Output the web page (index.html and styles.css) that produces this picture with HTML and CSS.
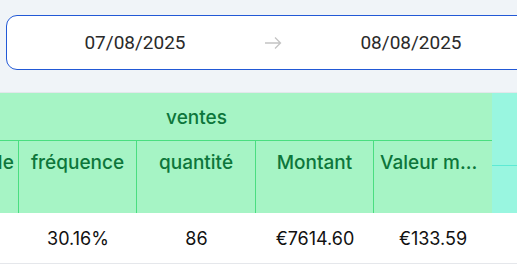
FILE: index.html
```html
<!DOCTYPE html>
<html lang="fr">
<head>
<meta charset="utf-8">
<title>Ventes</title>
<link rel="stylesheet" href="styles.css">
</head>
<body>
  <div class="toolbar">
    <div class="range-picker">
      <div class="range-input">07/08/2025</div>
      <span class="range-sep">
        <svg width="18" height="14" viewBox="0 0 18 14" aria-hidden="true">
          <path d="M1 7H16.5M11 1.5L16.5 7L11 12.5" fill="none" stroke="#c4c4c4" stroke-width="1.3"/>
        </svg>
      </span>
      <div class="range-input">08/08/2025</div>
    </div>
  </div>

  <div class="table-scroll">
    <div class="grid">
      <div class="cell group">ventes</div>
      <div class="cell extra extra-top"></div>

      <div class="cell col">Vente totale</div>
      <div class="cell col">fréquence</div>
      <div class="cell col">quantité</div>
      <div class="cell col">Montant</div>
      <div class="cell col col-last"><span class="clip">Valeur moyenne</span></div>
      <div class="cell extra extra-bottom"></div>

      <div class="cell data">69.84%</div>
      <div class="cell data">30.16%</div>
      <div class="cell data">86</div>
      <div class="cell data">€7614.60</div>
      <div class="cell data">€133.59</div>
      <div class="cell data"></div>
    </div>
  </div>
</body>
</html>
```

FILE: styles.css
```css
html, body {
  margin: 0;
  padding: 0;
}

body {
  width: 517px;
  height: 268px;
  overflow: hidden;
  background: #f0f4f8;
  font-family: Inter, "Noto Sans", sans-serif;
}

/* date range filter */
.toolbar {
  padding: 15px 0 22px 6px;
  height: 55px;
}

.range-picker {
  display: flex;
  align-items: center;
  width: 540px;
  height: 53px;
  padding: 0 4px;
  box-sizing: content-box;
  background: #fff;
  border: 1px solid #2259d6;
  border-radius: 11px;
}

.range-input {
  width: 248px;
  text-align: center;
  font-family: Roboto, "Noto Sans", sans-serif;
  font-size: 19px;
  color: #2a2a2a;
}

.range-sep {
  width: 28px;
  display: flex;
  justify-content: center;
}

/* sales table, scrolled horizontally */
.table-scroll {
  overflow: hidden;
  border-top: 1px solid #e3e7eb;
  background: #fff;
  height: 176px;
}

.grid {
  display: grid;
  grid-template-columns: 118px 118px 119px 118px 118px 140px;
  grid-template-rows: 48px 25px 47px 51px;
  margin-left: -99px;
  width: 631px;
}

.cell {
  box-sizing: border-box;
  display: flex;
  justify-content: center;
  font-size: 19px;
  font-weight: 500;
  color: #0d763b;
}

.group {
  grid-column: 1 / span 5;
  grid-row: 1;
  background: #a6f4c5;
  border-bottom: 1px solid #4ade80;
  align-items: center;
  padding-top: 2px;
}

.extra {
  background: #99f6e0;
}

.extra-top {
  grid-column: 6;
  grid-row: 1 / span 2;
  border-bottom: 1px solid #5eead4;
}

.extra-bottom {
  grid-column: 6;
  grid-row: 3;
}

.col {
  grid-row: 2 / span 2;
  background: #a6f4c5;
  border-right: 1px solid #4ade80;
  padding: 10px 6px 0;
  line-height: 24px;
  white-space: nowrap;
  overflow: hidden;
}

.col-last {
  border-right: 0;
}

.clip {
  display: block;
  overflow: hidden;
  text-overflow: ellipsis;
  white-space: nowrap;
}

.data {
  grid-row: 4;
  align-items: center;
  background: #fff;
  border-bottom: 1px solid #e5e7eb;
  font-size: 18px;
  font-weight: 400;
  color: #111;
}
```
